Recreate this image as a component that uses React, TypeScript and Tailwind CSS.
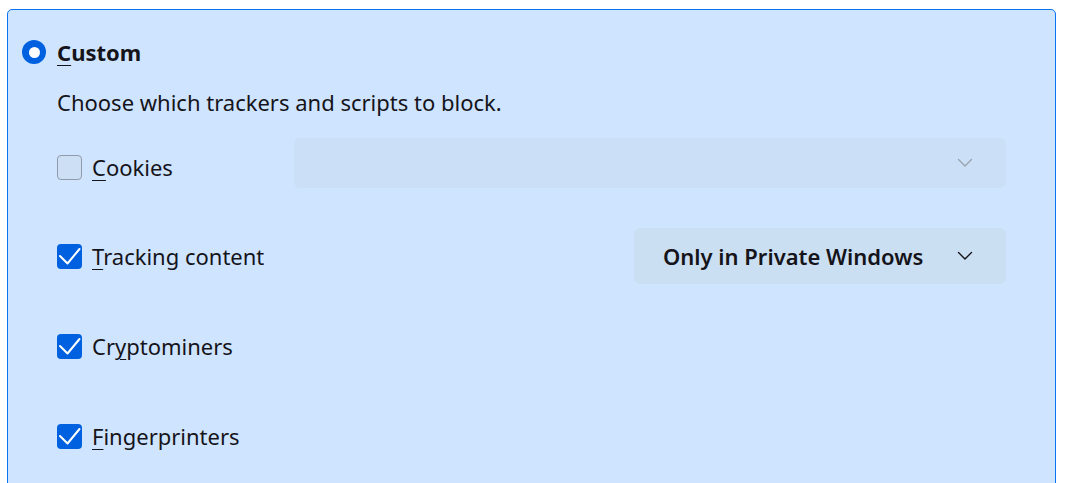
import React from 'react';

const font = { fontFamily: '"Noto Sans", "Open Sans", sans-serif' };

const Check = () => (
  <svg width="25" height="25" viewBox="0 0 25 25" fill="none" className="block">
    <path d="M3 12L10.5 19.5L22.5 5" stroke="#ffffff" strokeWidth="2" strokeLinecap="round" strokeLinejoin="round" />
  </svg>
);

const Chevron = ({ color }: { color: string }) => (
  <svg width="16" height="10" viewBox="0 0 16 10" fill="none" className="block">
    <path d="M1.5 1.5L8 8L14.5 1.5" stroke={color} strokeWidth="1.4" strokeLinecap="round" strokeLinejoin="round" />
  </svg>
);

const Checkbox = ({ checked }: { checked: boolean }) =>
  checked ? (
    <div className="w-[25px] h-[25px] rounded-[4px] bg-[#0061e0] shrink-0">
      <Check />
    </div>
  ) : (
    <div className="w-[25px] h-[25px] rounded-[4px] bg-[#cddff5] border border-[#8f9bab] shrink-0" />
  );

const Label = ({ k, rest }: { k: string; rest: string }) => (
  <span className="text-[22px] text-[#15141a] leading-[28px]">
    <span className="underline underline-offset-[4px] decoration-1">{k}</span>
    {rest}
  </span>
);

export default function App() {
  return (
    <div className="w-[1066px] h-[483px] bg-white overflow-hidden" style={font}>
      <div className="ml-[7px] mt-[9px] w-[1049px] h-[500px] rounded-[5px] border border-[#0a74f0] bg-[#cfe4fe] pl-[14px] pt-[30px] pr-[49px]">
        <div className="flex items-center gap-[11px] h-[24px]">
          <div className="w-[24px] h-[24px] rounded-full bg-[#0061e0] flex items-center justify-center shrink-0">
            <div className="w-[11px] h-[11px] rounded-full bg-white" />
          </div>
          <span className="text-[22px] font-bold text-[#15141a] leading-[28px]">
            <span className="underline underline-offset-[4px] decoration-1">C</span>ustom
          </span>
        </div>

        <div className="ml-[35px] mt-[24px] text-[22px] text-[#15141a] leading-[28px]">
          Choose which trackers and scripts to block.
        </div>

        <div className="ml-[35px] mt-[22px] flex flex-col gap-[34px]">
          <div className="flex h-[56px]">
            <div className="flex items-center gap-[10px] w-[237px] shrink-0 pt-[2px]">
              <Checkbox checked={false} />
              <Label k="C" rest="ookies" />
            </div>
            <div className="flex-1 h-[50px] rounded-[6px] bg-[#cbdff6] flex items-center justify-end pr-[33px]">
              <Chevron color="#9aa3ae" />
            </div>
          </div>

          <div className="flex h-[56px] items-center justify-between">
            <div className="flex items-center gap-[10px]">
              <Checkbox checked />
              <Label k="T" rest="racking content" />
            </div>
            <div className="h-[56px] w-[372px] rounded-[6px] bg-[#cbdff2] flex items-center pl-[29px] pr-[33px] justify-between">
              <span className="text-[22px] font-semibold text-[#15141a]">Only in Private Windows</span>
              <Chevron color="#15141a" />
            </div>
          </div>

          <div className="flex h-[56px] items-center gap-[10px]">
            <Checkbox checked />
            <span className="text-[22px] text-[#15141a] leading-[28px]">
              Cr<span className="underline underline-offset-[4px] decoration-1">y</span>ptominers
            </span>
          </div>

          <div className="flex h-[56px] items-center gap-[10px]">
            <Checkbox checked />
            <Label k="F" rest="ingerprinters" />
          </div>
        </div>
      </div>
    </div>
  );
}
